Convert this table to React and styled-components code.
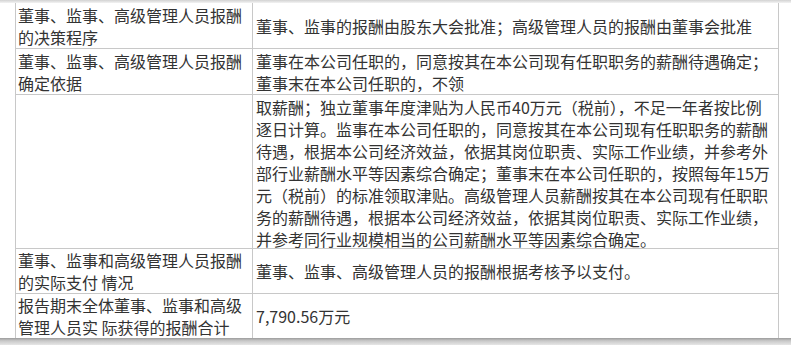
import React from 'react'
import styled, { createGlobalStyle } from 'styled-components'

const GlobalStyle = createGlobalStyle`
  body {
    margin: 0;
    background: #fff;
    font-family: "Noto Sans CJK SC", "Liberation Sans", sans-serif;
  }
`

const Page = styled.div`
  width: 791px;
  height: 345px;
  display: flex;
  flex-direction: column;
  overflow: hidden;
  background: #fff;
`

const TopShade = styled.div`
  height: 3px;
  flex-shrink: 0;
  background: linear-gradient(#d2d2d2, #f3f3f3);
`

const BottomShade = styled.div`
  height: 7px;
  flex-shrink: 0;
  background: linear-gradient(#9c9c9c, #c8c8c8 40%, #e6e6e6);
`

const Table = styled.div`
  flex: 1;
  margin-left: 15px;
  width: 764px;
  box-sizing: border-box;
  border-left: 1px solid #c8c8c8;
  border-right: 1px solid #c8c8c8;
  display: flex;
  flex-direction: column;
`

const Row = styled.div`
  display: grid;
  grid-template-columns: 237px 1fr;
  box-sizing: border-box;
  height: ${p => (p.$h ? `${p.$h}px` : 'auto')};
  flex: ${p => (p.$h ? 'none' : '1')};
  border-bottom: ${p => (p.$last ? 'none' : '1px solid #c8c8c8')};
`

const Cell = styled.div`
  display: flex;
  flex-direction: column;
  justify-content: ${p => (p.$top ? 'flex-start' : 'center')};
  padding-top: ${p => (p.$top ? '1px' : '0')};
  color: #333;
  font-size: 16px;
  line-height: 22px;
`

const LabelCell = styled(Cell)`
  box-sizing: border-box;
  border-right: 1px solid #c8c8c8;
  padding-left: 2px;
`

const ValueCell = styled(Cell)`
  padding-left: 3px;
`

const Line = styled.span`
  display: block;
  white-space: nowrap;
`

const rows = [
  {
    h: 46,
    label: ['董事、监事、高级管理人员报酬', '的决策程序'],
    value: ['董事、监事的报酬由股东大会批准；高级管理人员的报酬由董事会批准'],
  },
  {
    h: 46,
    label: ['董事、监事、高级管理人员报酬', '确定依据'],
    value: [
      '董事在本公司任职的，同意按其在本公司现有任职职务的薪酬待遇确定；',
      '董事末在本公司任职的，不领',
    ],
  },
  {
    h: 154,
    top: true,
    label: [],
    value: [
      '取薪酬；独立董事年度津贴为人民币40万元（税前），不足一年者按比例',
      '逐日计算。监事在本公司任职的，同意按其在本公司现有任职职务的薪酬',
      '待遇，根据本公司经济效益，依据其岗位职责、实际工作业绩，并参考外',
      '部行业薪酬水平等因素综合确定；董事末在本公司任职的，按照每年15万',
      '元（税前）的标准领取津贴。高级管理人员薪酬按其在本公司现有任职职',
      '务的薪酬待遇，根据本公司经济效益，依据其岗位职责、实际工作业绩，',
      '并参考同行业规模相当的公司薪酬水平等因素综合确定。',
    ],
  },
  {
    h: 45,
    label: ['董事、监事和高级管理人员报酬', '的实际支付 情况'],
    value: ['董事、监事、高级管理人员的报酬根据考核予以支付。'],
  },
  {
    last: true,
    label: ['报告期末全体董事、监事和高级', '管理人员实 际获得的报酬合计'],
    value: ['7,790.56万元'],
  },
]

const App = () => {
  return (
    <Page>
      <GlobalStyle />
      <TopShade />
      <Table>
        {rows.map((row, i) => (
          <Row key={i} $h={row.h} $last={row.last}>
            <LabelCell $top={row.top}>
              {row.label.map(t => <Line key={t}>{t}</Line>)}
            </LabelCell>
            <ValueCell $top={row.top}>
              {row.value.map(t => <Line key={t}>{t}</Line>)}
            </ValueCell>
          </Row>
        ))}
      </Table>
      <BottomShade />
    </Page>
  )
}

export default App
